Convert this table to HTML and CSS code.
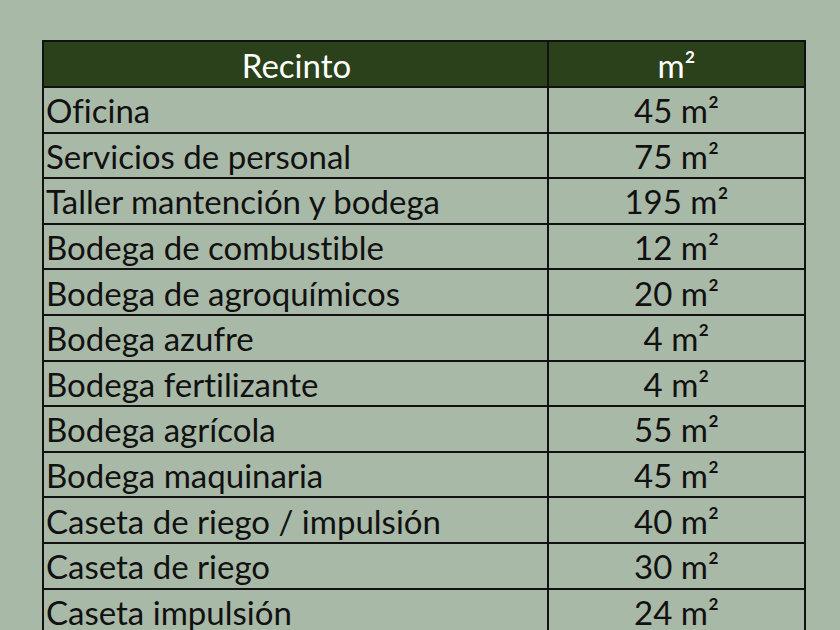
FILE: index.html
```html
<!DOCTYPE html>
<html lang="es">
<head>
<meta charset="utf-8">
<link rel="stylesheet" href="styles.css">
</head>
<body>
<div class="page">
<table class="tbl">
<thead>
<tr><th class="c1">Recinto</th><th class="c2">m²</th></tr>
</thead>
<tbody>
<tr><td class="c1">Oficina</td><td class="c2">45 m²</td></tr>
<tr><td class="c1">Servicios de personal</td><td class="c2">75 m²</td></tr>
<tr><td class="c1">Taller mantención y bodega</td><td class="c2">195 m²</td></tr>
<tr><td class="c1">Bodega de combustible</td><td class="c2">12 m²</td></tr>
<tr><td class="c1">Bodega de agroquímicos</td><td class="c2">20 m²</td></tr>
<tr><td class="c1">Bodega azufre</td><td class="c2">4 m²</td></tr>
<tr><td class="c1">Bodega fertilizante</td><td class="c2">4 m²</td></tr>
<tr><td class="c1">Bodega agrícola</td><td class="c2">55 m²</td></tr>
<tr><td class="c1">Bodega maquinaria</td><td class="c2">45 m²</td></tr>
<tr><td class="c1">Caseta de riego / impulsión</td><td class="c2">40 m²</td></tr>
<tr><td class="c1">Caseta de riego</td><td class="c2">30 m²</td></tr>
<tr><td class="c1">Caseta impulsión</td><td class="c2">24 m²</td></tr>
</tbody>
</table>
</div>
</body>
</html>
```
FILE: styles.css
```css
html, body {
  margin: 0;
  padding: 0;
  background: #a9b9a7;
  overflow: hidden;
}
.page {
  width: 840px;
  height: 630px;
  padding: 40px 0 0 42px;
  box-sizing: border-box;
  font-family: Lato, "Open Sans", sans-serif;
  font-variant-ligatures: none;
}
.tbl {
  border-collapse: collapse;
  width: 764px;
  table-layout: fixed;
}
.tbl th, .tbl td {
  border: 2px solid #111;
  padding: 2px 0 0 2px;
  font-size: 33px;
  font-weight: normal;
  color: #111;
  white-space: nowrap;
  overflow: hidden;
  line-height: 1;
}
.tbl th {
  background: #2b411b;
  color: #fff;
  height: 42px;
  text-align: center;
}
.tbl td {
  height: 41.6px;
}
.c1 { width: 501px; text-align: left; }
.tbl .c2 { text-align: center; padding: 2px 0 0 0; }
.tbl th.c1 { text-align: center; }
```
